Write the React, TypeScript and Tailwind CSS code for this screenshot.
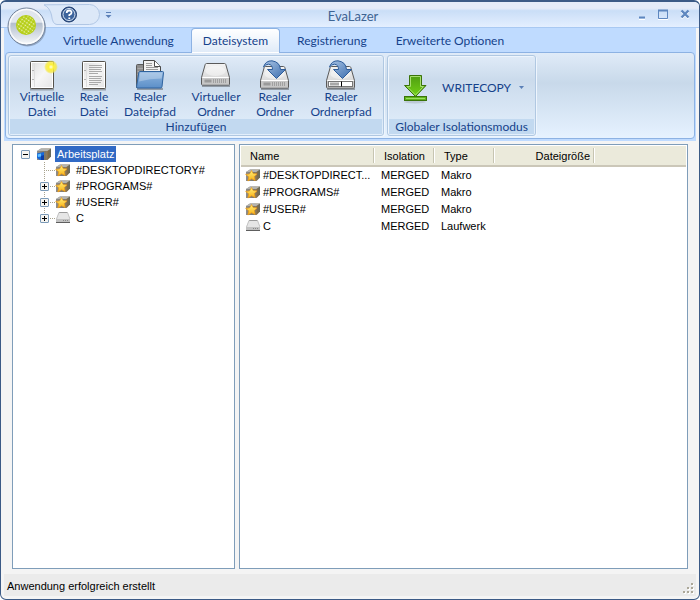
import { useState, type ReactNode } from 'react'
import clsx from 'clsx'

const tabs = ['Virtuelle Anwendung', 'Dateisystem', 'Registrierung', 'Erweiterte Optionen']

type Entry = { name: string; type: string; kind: 'macro' | 'drive'; expandable: boolean }

const entries: Entry[] = [
  { name: '#DESKTOPDIRECTORY#', type: 'Makro', kind: 'macro', expandable: false },
  { name: '#PROGRAMS#', type: 'Makro', kind: 'macro', expandable: true },
  { name: '#USER#', type: 'Makro', kind: 'macro', expandable: true },
  { name: 'C', type: 'Laufwerk', kind: 'drive', expandable: true },
]

const shorten = (name: string) => (name.length > 16 ? `${name.slice(0, 14)}...` : name)

function Defs() {
  return (
    <svg className="absolute size-0" aria-hidden="true">
      <defs>
        <linearGradient id="paper" x1="0" y1="0" x2="1" y2="1">
          <stop offset="0" stopColor="#dcdcdc" />
          <stop offset=".5" stopColor="#f6f6f6" />
          <stop offset="1" stopColor="#e4e4e4" />
        </linearGradient>
        <linearGradient id="metal" x1="0" y1="0" x2="0" y2="1">
          <stop offset="0" stopColor="#f4f4f4" />
          <stop offset="1" stopColor="#cdcdcd" />
        </linearGradient>
        <linearGradient id="folder" x1="0" y1="0" x2="0" y2="1">
          <stop offset="0" stopColor="#8fb6e0" />
          <stop offset="1" stopColor="#5c8fc8" />
        </linearGradient>
        <linearGradient id="blueArrow" x1="0" y1="0" x2="1" y2="1">
          <stop offset="0" stopColor="#a9c4e4" />
          <stop offset="1" stopColor="#3a6cae" />
        </linearGradient>
        <linearGradient id="greenArrow" x1="0" y1="0" x2="0" y2="1">
          <stop offset="0" stopColor="#4f9d12" />
          <stop offset="1" stopColor="#73d216" />
        </linearGradient>
        <radialGradient id="glow">
          <stop offset="0" stopColor="#fffde0" />
          <stop offset=".35" stopColor="#fff23a" />
          <stop offset=".75" stopColor="#f6e83a" stopOpacity=".75" />
          <stop offset="1" stopColor="#f6e83a" stopOpacity="0" />
        </radialGradient>
        <linearGradient id="orbTop" x1="0" y1="0" x2="0" y2="1">
          <stop offset="0" stopColor="#dfe4ec" />
          <stop offset=".38" stopColor="#e3e8f0" />
          <stop offset=".42" stopColor="#b4bfce" />
          <stop offset="1" stopColor="#f8fafc" />
        </linearGradient>
        <linearGradient id="box" x1="0" y1="0" x2="1" y2="0">
          <stop offset="0" stopColor="#8d8d8d" />
          <stop offset=".6" stopColor="#7c7768" />
          <stop offset=".8" stopColor="#a3814f" />
          <stop offset="1" stopColor="#71807a" />
        </linearGradient>
        <linearGradient id="star" x1="0" y1="0" x2="0" y2="1">
          <stop offset="0" stopColor="#fff27a" />
          <stop offset="1" stopColor="#f9ae12" />
        </linearGradient>
        <pattern id="dots" width="3" height="3" patternUnits="userSpaceOnUse" patternTransform="rotate(35)">
          <circle cx="1.500" cy="1.500" r=".85" fill="#f3f7c4" />
        </pattern>
      </defs>
    </svg>
  )
}

function Orb() {
  return (
    <svg viewBox="0 0 40 40" className="size-10">
      <circle cx="20.500" cy="21" r="18.500" fill="#5c6b80" opacity=".45" />
      <circle cx="19.500" cy="19.500" r="18.500" fill="url(#orbTop)" stroke="#73839b" />
      <circle cx="19.500" cy="19.500" r="17" fill="none" stroke="#fff" strokeWidth="1.500" opacity=".8" />
      <circle cx="19" cy="18" r="10" fill="#b4cd14" />
      <circle cx="19" cy="18" r="9" fill="url(#dots)" />
    </svg>
  )
}

function PageIcon({ lined, glow }: { lined?: boolean; glow?: boolean }) {
  return (
    <svg viewBox="0 0 32 32" className="size-8">
      <path d="M4 29.500h24" stroke="#333" strokeWidth="2" opacity=".35" />
      <rect x="4.500" y="1.500" width="23" height="27" rx=".8" fill="url(#paper)" stroke="#55524c" />
      <rect x="5.500" y="2.500" width="21" height="25" fill="none" stroke="#fff" />
      <path d="M8.500 3v24" stroke="#dedede" />
      <path d="M6.500 10.500h1M6.500 19.500h1" stroke="#777" />
      {lined && (
        <path d="M11 5.500h13M11 7.500h13M11 9.500h12M11 11.500h13M11 13.500h9M11 16.500h13M11 18.500h12M11 20.500h13M11 22.500h12M11 24.500h9" stroke="#a9a9a9" />
      )}
      {glow && <circle cx="25" cy="7" r="7" fill="url(#glow)" />}
    </svg>
  )
}

function FolderIcon() {
  return (
    <svg viewBox="0 0 32 32" className="size-8">
      <path d="M3 29h26" stroke="#222" strokeWidth="2" opacity=".35" />
      <path d="M2.500 27.500v-22q0-1 1-1h7q1 0 1 1v2h10v20z" fill="#8d8d8d" stroke="#5a5a5a" />
      <path d="M3.500 8.500h8M3.500 11.500h8M3.500 14.500h6" stroke="#a9a9a9" />
      <path d="M9.500 24v-23.500h11l6 6v17.500z" fill="#f1f1f1" stroke="#4b4b4b" />
      <path d="M20.500 1v5.500h6" fill="#fff" stroke="#4b4b4b" />
      <path d="M12 3.500h6M12 5.500h6M12 7.500h12M12 9.500h12" stroke="#9b9b9b" />
      <path d="M6 11.500h22.500q1.200 0 1 1.200l-1.500 14q-.2 1.300-1.200 1.300h-23q-1.500 0-1.200-1.500l2.200-14q.2-1 1.200-1z" fill="url(#folder)" stroke="#2f639f" />
      <path d="M6.200 12.500h22.300l-.8 6q-12 0-22.700 3z" fill="#fff" opacity=".28" />
    </svg>
  )
}

function DriveIcon({ arrow, bar }: { arrow?: boolean; bar?: boolean }) {
  return (
    <svg viewBox="0 0 32 32" className="size-8">
      <g transform={arrow ? 'translate(0 3)' : undefined}>
        <path d="M2 26h28" stroke="#222" strokeWidth="2" opacity=".35" />
        <path d="M6.500 3.500h18q1 0 1.300 1l3.700 13v6.500q0 1-1 1h-26q-1 0-1-1v-6.500l3.700-13q.3-1 1.300-1z" fill="url(#metal)" stroke="#5a5a5a" />
        <ellipse cx="15.500" cy="11" rx="10" ry="5" fill="#fff" opacity=".4" />
        <path d="M2.500 17.500h26" stroke="#fff" />
        <rect x="2" y="18" width="27" height="6.500" fill="#c6c6c6" />
        {bar ? (
          <>
            <rect x="3.500" y="18.500" width="24" height="5" fill="#fff" stroke="#777" />
            <rect x="5" y="19.500" width="9" height="3" fill="#a8a8a8" />
            <path d="M16.500 18.500v5" stroke="#000" />
          </>
        ) : (
          <>
            <rect x="4.500" y="19.500" width="7" height="3" fill="#9a9a9a" />
            <path d="M13.500 19v4M15.500 19v4M17.500 19v4M19.500 19v4M21.500 19v4M23.500 19v4M25.500 19v4" stroke="#a0a0a0" />
          </>
        )}
      </g>
      {arrow && (
        <path d="M4.500 7Q6.500 .6 13 .8Q21 2 21.500 9.500h5L17.500 18.500L8.500 9.500h5Q13.500 4.600 9.500 4.200Q6.500 4.300 4.500 7z" fill="url(#blueArrow)" stroke="#2d5c9b" strokeLinejoin="round" />
      )}
    </svg>
  )
}

function DownloadIcon() {
  return (
    <svg viewBox="0 0 32 32" className="size-8">
      <ellipse cx="16" cy="30" rx="11" ry="1.500" fill="#333" opacity=".15" />
      <path d="M10.500 3.500h12v10h4.500L16.500 24.500L5.500 13.500h5z" fill="url(#greenArrow)" stroke="#3a7309" />
      <path d="M11.500 4.500h10v10h3L16.500 23L8 14.500h3.500z" fill="none" stroke="#a7de70" />
      <rect x="5.500" y="24.500" width="22" height="4" fill="#5fb51b" stroke="#3a7309" />
      <path d="M7 26.500h19" stroke="#9ade60" />
    </svg>
  )
}

function SmallIcon({ kind }: { kind: Entry['kind'] | 'computer' }) {
  if (kind === 'drive') {
    return (
      <svg viewBox="0 0 16 16" className="size-4 shrink-0">
        <path d="M4 2h8.500l2.500 7v3.500h-14v-3.500z" fill="#e6e6e6" />
        <path d="M4 2.500h8.500" stroke="#9c9c9c" />
        <path d="M4 2.500L1.500 9M12.500 2.500l2.500 6.500" stroke="#c4c4c4" />
        <path d="M1 9h14v4h-14z" fill="#c2c2c2" />
        <path d="M1 12.500h14" stroke="#5e5e5e" />
        <path d="M8 10.500h6" stroke="#8a8a8a" strokeDasharray="1 1" />
      </svg>
    )
  }
  return (
    <svg viewBox="0 0 16 16" className="size-4 shrink-0">
      <path d="M1 5l4-2.500h10v8l-3.500 3.500h-10.500z" fill="url(#box)" />
      <path d="M1 5l4-2.500h10l-3.500 2.500z" fill="#b4b4b0" />
      <path d="M11.500 5l3.500-2.500v8l-3.500 3.500z" fill="#4f4c3c" opacity=".4" />
      {kind === 'computer' ? (
        <>
          <path d="M1 7.500l7-1.500v8h-4l-3-2z" fill="#1668d8" />
          <path d="M1.500 8.500l3.500-1v3l-3 .5z" fill="#5fc0ff" />
          <path d="M5 10l3-1v5h-3z" fill="#0c3fa8" />
        </>
      ) : (
        <path d="M6.500 3.500l1.700 3 3.800.4-2.600 2.700.7 3.900-3.600-1.700-3.600 2.200.8-4.200L.6 7.400l4-.5z" fill="url(#star)" stroke="#ee9a14" strokeWidth=".7" />
      )}
    </svg>
  )
}

// Expander column of the tree: dotted connector lines and the +/- box
function Branch({ mark, up, down, across }: { mark?: '+' | '-'; up?: boolean; down?: boolean; across?: boolean }) {
  return (
    <svg viewBox="0 0 19 16" className="h-4 w-[19px] shrink-0">
      <g stroke="#a9a48f" strokeDasharray="1 1">
        {up && <path d="M8.500 0v8" />}
        {down && <path d="M8.500 8v8" />}
        {across && <path d="M8 8.500h11" />}
      </g>
      {mark && (
        <>
          <rect x="4.500" y="4.500" width="8" height="8" rx=".5" fill="#f6f5f1" stroke="#7b9ab8" />
          <path d={mark === '+' ? 'M6 8.500h5M8.500 6v5' : 'M6 8.500h5'} stroke="#000" />
        </>
      )}
    </svg>
  )
}

function Group({ title, children }: { title: string; children: ReactNode }) {
  return (
    <section className="flex flex-col rounded-[3px] border border-[#b0c8e2] bg-linear-to-b from-[#e0ebf8] via-[#cbdbec] via-30% to-[#e3effc] shadow-[inset_1px_1px_0_#eef5fd,1px_1px_0_#eef5fd]">
      <div className="flex min-h-0 flex-1">{children}</div>
      <h2 className="mx-px mb-px h-[15px] shrink-0 bg-[#c2d9f0] text-center leading-[15px]">{title}</h2>
    </section>
  )
}

function RibbonButton({ icon, lines }: { icon: ReactNode; lines: [string, string] }) {
  return (
    <button className="flex flex-col items-center whitespace-nowrap pt-1 leading-[15px]">
      <span className="h-[29px]">{icon}</span>
      <span>{lines[0]}</span>
      <span>{lines[1]}</span>
    </button>
  )
}

function TitleBar() {
  return (
    <header className="grid h-[26px] shrink-0 grid-cols-[1fr_auto_1fr] items-center border-b border-[#a9c9f2] bg-linear-to-b from-[#e4ebf8] from-25% via-[#cadef7] via-35% to-[#e4efff]">
      <div className="flex items-center">
        <button aria-label="EvaLazer" className="absolute top-[5px] left-1.5">
          <Orb />
        </button>
        <div className="ml-[42px] flex items-center gap-1">
          <button aria-label="Hilfe">
            <svg viewBox="0 0 58 22" className="h-[22px] w-[58px]">
              <path d="M1 .8Q7 4 8.500 11Q9.500 20.500 14 20.500H46.500a10 10 0 0 0 0-20z" fill="#dce8f8" stroke="#b0c6e4" />
              <circle cx="26" cy="10.500" r="7.500" fill="#2f568f" stroke="#233f70" />
              <circle cx="26" cy="10.500" r="6" fill="#3d649d" stroke="#dfe9f5" />
              <path d="M23.700 9Q23.700 6.500 26.200 6.500T28.500 8.700Q28.500 10 26.300 11V12M26.300 13.500v1.500" fill="none" stroke="#fff" strokeWidth="1.800" />
            </svg>
          </button>
          <button aria-label="Schnellzugriff anpassen">
            <svg viewBox="0 0 7 8" className="h-2 w-[7px]">
              <path d="M1 1.500h5" stroke="#5b80b8" />
              <path d="M.5 4h6l-3 3z" fill="#5b80b8" />
            </svg>
          </button>
        </div>
      </div>
      <h1 className="pt-0.5 pl-1.5 text-[13px] leading-5 text-[#3e6493]">EvaLazer</h1>
      <div className="flex justify-end gap-3 pr-[9px]">
        <button aria-label="Minimieren">
          <svg viewBox="0 0 8 11" className="h-[11px] w-2">
            <path d="M1 8.500h6" stroke="#5e87bf" strokeWidth="2" />
            <path d="M1 10.500h6" stroke="#fff" />
          </svg>
        </button>
        <button aria-label="Maximieren">
          <svg viewBox="0 0 10 11" className="h-[11px] w-2.5">
            <path d="M.5 1v8.500h9V1" fill="none" stroke="#5e87bf" />
            <path d="M0 1.500h10" stroke="#5e87bf" strokeWidth="2" />
            <path d="M0 10.500h10" stroke="#fff" />
          </svg>
        </button>
        <button aria-label="Schließen">
          <svg viewBox="0 0 10 11" className="h-[11px] w-2.5">
            <path d="M1.500 2.500l7 7M8.500 2.500l-7 7" stroke="#fff" strokeWidth="2.200" />
            <path d="M1.500 1.500l7 7M8.500 1.500l-7 7" stroke="#5e87bf" strokeWidth="2.400" />
          </svg>
        </button>
      </div>
    </header>
  )
}

export default function App() {
  const [tab, setTab] = useState('Dateisystem')

  return (
    <div className="relative flex h-screen flex-col overflow-hidden rounded-md border border-t-2 border-[#3b5a86] bg-[#f4f4f4] font-[Lato,'Open_Sans',sans-serif] text-xs text-[#15428b]">
      <Defs />
      <TitleBar />

      <div className="mx-[3px] shrink-0 bg-[#bfdbff] px-px pb-0.5">
        <nav className="flex h-6 gap-[5px] pl-[46px]">
          {tabs.map((name) => (
            <button
              key={name}
              onClick={() => setTab(name)}
              className={clsx(
                'h-[25px] rounded-t border px-[11px]',
                tab === name
                  ? 'z-10 border-[#8db2e3] border-b-transparent bg-linear-to-b from-white to-[#e0ebf8]'
                  : 'border-transparent',
              )}
            >
              {name}
            </button>
          ))}
        </nav>
        <div className="flex h-[87px] gap-[3px] rounded border border-[#8db2e3] bg-linear-to-b from-[#e0ebf8] via-[#c8d9ea] via-35% to-[#e6f2ff] p-0.5">
          <Group title="Hinzufügen">
            <div className="grid grid-cols-[60px_44px_68px_64px_54px_78px] px-[3px]">
              <RibbonButton icon={<PageIcon glow />} lines={['Virtuelle', 'Datei']} />
              <RibbonButton icon={<PageIcon lined />} lines={['Reale', 'Datei']} />
              <RibbonButton icon={<FolderIcon />} lines={['Realer', 'Dateipfad']} />
              <RibbonButton icon={<DriveIcon />} lines={['Virtueller', 'Ordner']} />
              <RibbonButton icon={<DriveIcon arrow />} lines={['Realer', 'Ordner']} />
              <RibbonButton icon={<DriveIcon arrow bar />} lines={['Realer', 'Ordnerpfad']} />
            </div>
          </Group>
          <Group title="Globaler Isolationsmodus">
            <button aria-haspopup="menu" className="flex w-[147px] items-center pl-[11px]">
              <DownloadIcon />
              <span className="ml-[11px]">WRITECOPY</span>
              <svg viewBox="0 0 5 3" className="ml-2 h-[3px] w-[5px]">
                <path d="M0 0h5L2.500 3z" fill="#5b80b8" />
              </svg>
            </button>
          </Group>
        </div>
      </div>

      <main className="flex min-h-0 flex-1 gap-1 px-[11px] pt-[3px] pb-[5px] font-['Liberation_Sans',Arial,sans-serif] text-[11px] text-black">
        <ul className="w-[223px] shrink-0 border border-[#7f9db9] bg-white pt-px pl-1 leading-4">
          <li>
            <div className="flex h-4">
              <Branch mark="-" />
              <SmallIcon kind="computer" />
              <span className="ml-[3px] bg-[#316ac5] px-0.5 text-white">Arbeitsplatz</span>
            </div>
            <ul className="pl-[19px]">
              {entries.map((entry, i) => (
                <li key={entry.name} className="flex h-4">
                  <Branch mark={entry.expandable ? '+' : undefined} up down={i < entries.length - 1} across />
                  <SmallIcon kind={entry.kind} />
                  <span className="ml-[5px]">{entry.name}</span>
                </li>
              ))}
            </ul>
          </li>
        </ul>

        <div className="min-w-0 flex-1 border border-[#7f9db9] bg-white p-px">
          <table className="w-full table-fixed border-collapse text-left">
            <thead>
              <tr className="h-5 border-b-2 border-[#cbc7b8] bg-[#ebeadb] [&_span]:block [&_span]:h-[15px] [&_span]:border-r [&_span]:border-[#c7c5b2] [&_span]:leading-[17px] [&_span]:shadow-[1px_0_0_#fff] [&_th]:p-0 [&_th]:font-normal">
                <th className="w-[133px]"><span className="pl-[9px]">Name</span></th>
                <th className="w-[60px]"><span className="pl-2.5">Isolation</span></th>
                <th className="w-[60px]"><span className="pl-2.5">Type</span></th>
                <th className="w-[100px]"><span className="pr-[3px] text-right">Dateigröße</span></th>
                <td />
              </tr>
            </thead>
            <tbody>
              {entries.map((entry) => (
                <tr key={entry.name} className="h-[17px] leading-4">
                  <td className="p-0 pl-1">
                    <div className="flex gap-0.5" title={entry.name}>
                      <SmallIcon kind={entry.kind} />
                      <span className="whitespace-nowrap">{shorten(entry.name)}</span>
                    </div>
                  </td>
                  <td className="p-0 pl-[7px]">MERGED</td>
                  <td className="p-0 pl-[7px]">{entry.type}</td>
                  <td />
                  <td />
                </tr>
              ))}
            </tbody>
          </table>
        </div>
      </main>

      <footer className="mx-[3px] mb-[3px] flex h-[22px] shrink-0 items-center justify-between bg-[#ebebeb] pr-0.5 pl-[3px] font-['Liberation_Sans',Arial,sans-serif] text-[11px] text-black">
        <span className="pt-0.5">Anwendung erfolgreich erstellt</span>
        <svg viewBox="0 0 12 12" className="mt-1.5 size-3">
          <path d="M9 1h2v2h-2zM5 5h2v2h-2zM9 5h2v2h-2zM1 9h2v2h-2zM5 9h2v2h-2zM9 9h2v2h-2z" fill="#fff" transform="translate(1 1)" />
          <path d="M9 1h2v2h-2zM5 5h2v2h-2zM9 5h2v2h-2zM1 9h2v2h-2zM5 9h2v2h-2zM9 9h2v2h-2z" fill="#aca899" />
        </svg>
      </footer>
    </div>
  )
}
